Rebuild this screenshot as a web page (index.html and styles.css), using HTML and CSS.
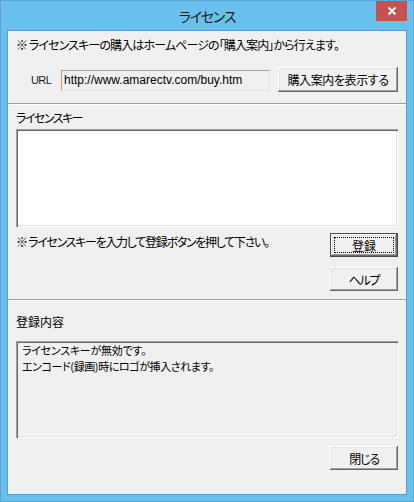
FILE: index.html
```html
<!DOCTYPE html>
<html lang="ja">
<head>
<meta charset="utf-8">
<title>ライセンス</title>
<link rel="stylesheet" href="styles.css">
</head>
<body>
<div class="window">
  <div class="titlebar">
    <div class="title">ライセンス</div>
    <div class="close">
      <svg width="10" height="10" viewBox="0 0 10 10"><path d="M1.5 1.5 L8.5 8.5 M8.5 1.5 L1.5 8.5" stroke="#fff" stroke-width="2" fill="none"/></svg>
    </div>
  </div>
  <div class="client">
    <section class="sec sec-buy">
      <div class="line note1">※ ライセンスキーの購入はホームページの「購入案内」から行えます。</div>
      <div class="url-row">
        <span class="url-label">URL</span>
        <div class="url-box">http://www.amarectv.com/buy.htm</div>
        <div class="btn btn-wide">購入案内を表示する</div>
      </div>
    </section>
    <div class="sep"></div>
    <section class="sec sec-key">
      <div class="line label-key">ライセンスキー</div>
      <div class="keybox"></div>
      <div class="reg-row">
        <div class="line note2">※ ライセンスキーを入力して登録ボタンを押して下さい。</div>
        <div class="btn btn-default"><span class="focus">登録</span></div>
      </div>
      <div class="btn-row help-row"><div class="btn btn-kana">ヘルプ</div></div>
    </section>
    <div class="sep"></div>
    <section class="sec sec-info">
      <div class="line label-info">登録内容</div>
      <div class="infobox">
        <div class="info-line info1">ライセンスキーが無効です。</div>
        <div class="info-line info2">エンコード(録画)時にロゴが挿入されます。</div>
      </div>
      <div class="btn-row close-row"><div class="btn btn-kana">閉じる</div></div>
    </section>
  </div>
</div>
</body>
</html>
```

FILE: styles.css
```css
html, body {
  margin: 0;
  padding: 0;
}
body {
  width: 414px;
  height: 502px;
  overflow: hidden;
  font-family: "Noto Sans CJK JP", "Noto Sans", sans-serif;
  font-size: 12px;
  color: #000;
}
.window {
  box-sizing: border-box;
  width: 414px;
  height: 502px;
  background: #69bfed;
  border: 1px solid #5ca6d6;
  padding: 0 6px 6px 6px;
  display: flex;
  flex-direction: column;
}
.titlebar {
  height: 29px;
  display: grid;
  grid-template-columns: 1fr auto 1fr;
  align-items: start;
}
.title {
  grid-column: 2;
  font-size: 14px;
  line-height: 30px;
  letter-spacing: -1.2px;
  color: #202020;
  font-feature-settings: "palt";
}
.close {
  grid-column: 3;
  justify-self: end;
  width: 31px;
  height: 20px;
  background: #c75050;
  display: flex;
  align-items: center;
  justify-content: center;
}
.close svg { display: block; }
.client {
  flex: 1;
  background: #f0f0f0;
  border: 1px solid #5a9ccd;
  display: flex;
  flex-direction: column;
}
.sec {
  padding: 0 8px;
  display: flex;
  flex-direction: column;
}
.line {
  line-height: 14px;
  height: 14px;
  white-space: nowrap;
  font-feature-settings: "palt";
}
.sec-buy { height: 72px; }
.note1 { margin-top: 7px; letter-spacing: -0.88px; }
.url-row {
  margin-top: 15px;
  display: flex;
  align-items: center;
}
.url-label {
  font-family: "Liberation Sans", Arial, sans-serif;
  font-size: 11px;
  letter-spacing: -0.6px;
  margin-left: 15px;
  width: 18px;
  margin-right: 12px;
  color: #1a1a1a;
}
.url-box {
  box-sizing: border-box;
  width: 209px;
  height: 21px;
  margin-top: 1px;
  background: #f0f0f0;
  border-top: 1px solid #a0a0a0;
  border-left: 1px solid #c8a24a;
  border-right: 1px solid #e3e3e3;
  border-bottom: 1px solid #e3e3e3;
  font-family: "Liberation Sans", Arial, sans-serif;
  font-size: 12px;
  line-height: 19px;
  padding-left: 2px;
  white-space: nowrap;
}
.btn {
  box-sizing: border-box;
  width: 68px;
  height: 24px;
  background: #f0f0f0;
  box-shadow: inset -1px -1px #696969, inset 1px 1px #ffffff, inset -2px -2px #a0a0a0, inset 2px 2px #e3e3e3;
  display: flex;
  align-items: center;
  justify-content: center;
  font-feature-settings: "palt";
  white-space: nowrap;
}
.btn-wide {
  width: 120px;
  height: 25px;
  margin-left: 8px;
  letter-spacing: -0.4px;
}
.btn-kana { letter-spacing: -1.3px; }
.sep {
  height: 0;
  border-top: 1px solid #a0a0a0;
  border-bottom: 1px solid #ffffff;
}
.label-key { margin-top: 6px; letter-spacing: -1.5px; }
.keybox {
  box-sizing: border-box;
  margin-top: 4px;
  height: 98px;
  background: #fff;
  box-shadow: inset 1px 1px #a0a0a0, inset 2px 2px #696969, inset -1px -1px #ffffff, inset -2px -2px #e3e3e3;
}
.reg-row {
  margin-top: 6px;
  display: flex;
  justify-content: space-between;
  align-items: flex-start;
}
.note2 { margin-top: 2px; letter-spacing: -1.3px; }
.btn-default {
  border: 1px solid #4a4a4a;
  padding: 3px;
}
.btn-default .focus {
  box-sizing: border-box;
  flex: 1;
  align-self: stretch;
  border: 1px dotted #000;
  display: flex;
  align-items: center;
  justify-content: center;
}
.btn-row {
  display: flex;
  justify-content: flex-end;
}
.help-row { margin-top: 10px; }
.sec-key { height: 194px; box-sizing: border-box; }
.label-info { margin-top: 14px; }
.infobox {
  box-sizing: border-box;
  margin-top: 12px;
  height: 97px;
  padding: 1px 6px 0;
  background: #f0f0f0;
  box-shadow: inset 1px 1px #a0a0a0, inset 2px 2px #696969, inset -1px -1px #ffffff, inset -2px -2px #e3e3e3;
}
.info-line {
  font-size: 11px;
  line-height: 16px;
  height: 16px;
  white-space: nowrap;
  font-feature-settings: "palt";
}
.info1 { letter-spacing: -0.25px; }
.info2 { letter-spacing: -0.4px; }
.close-row { margin-top: 8px; }
```
